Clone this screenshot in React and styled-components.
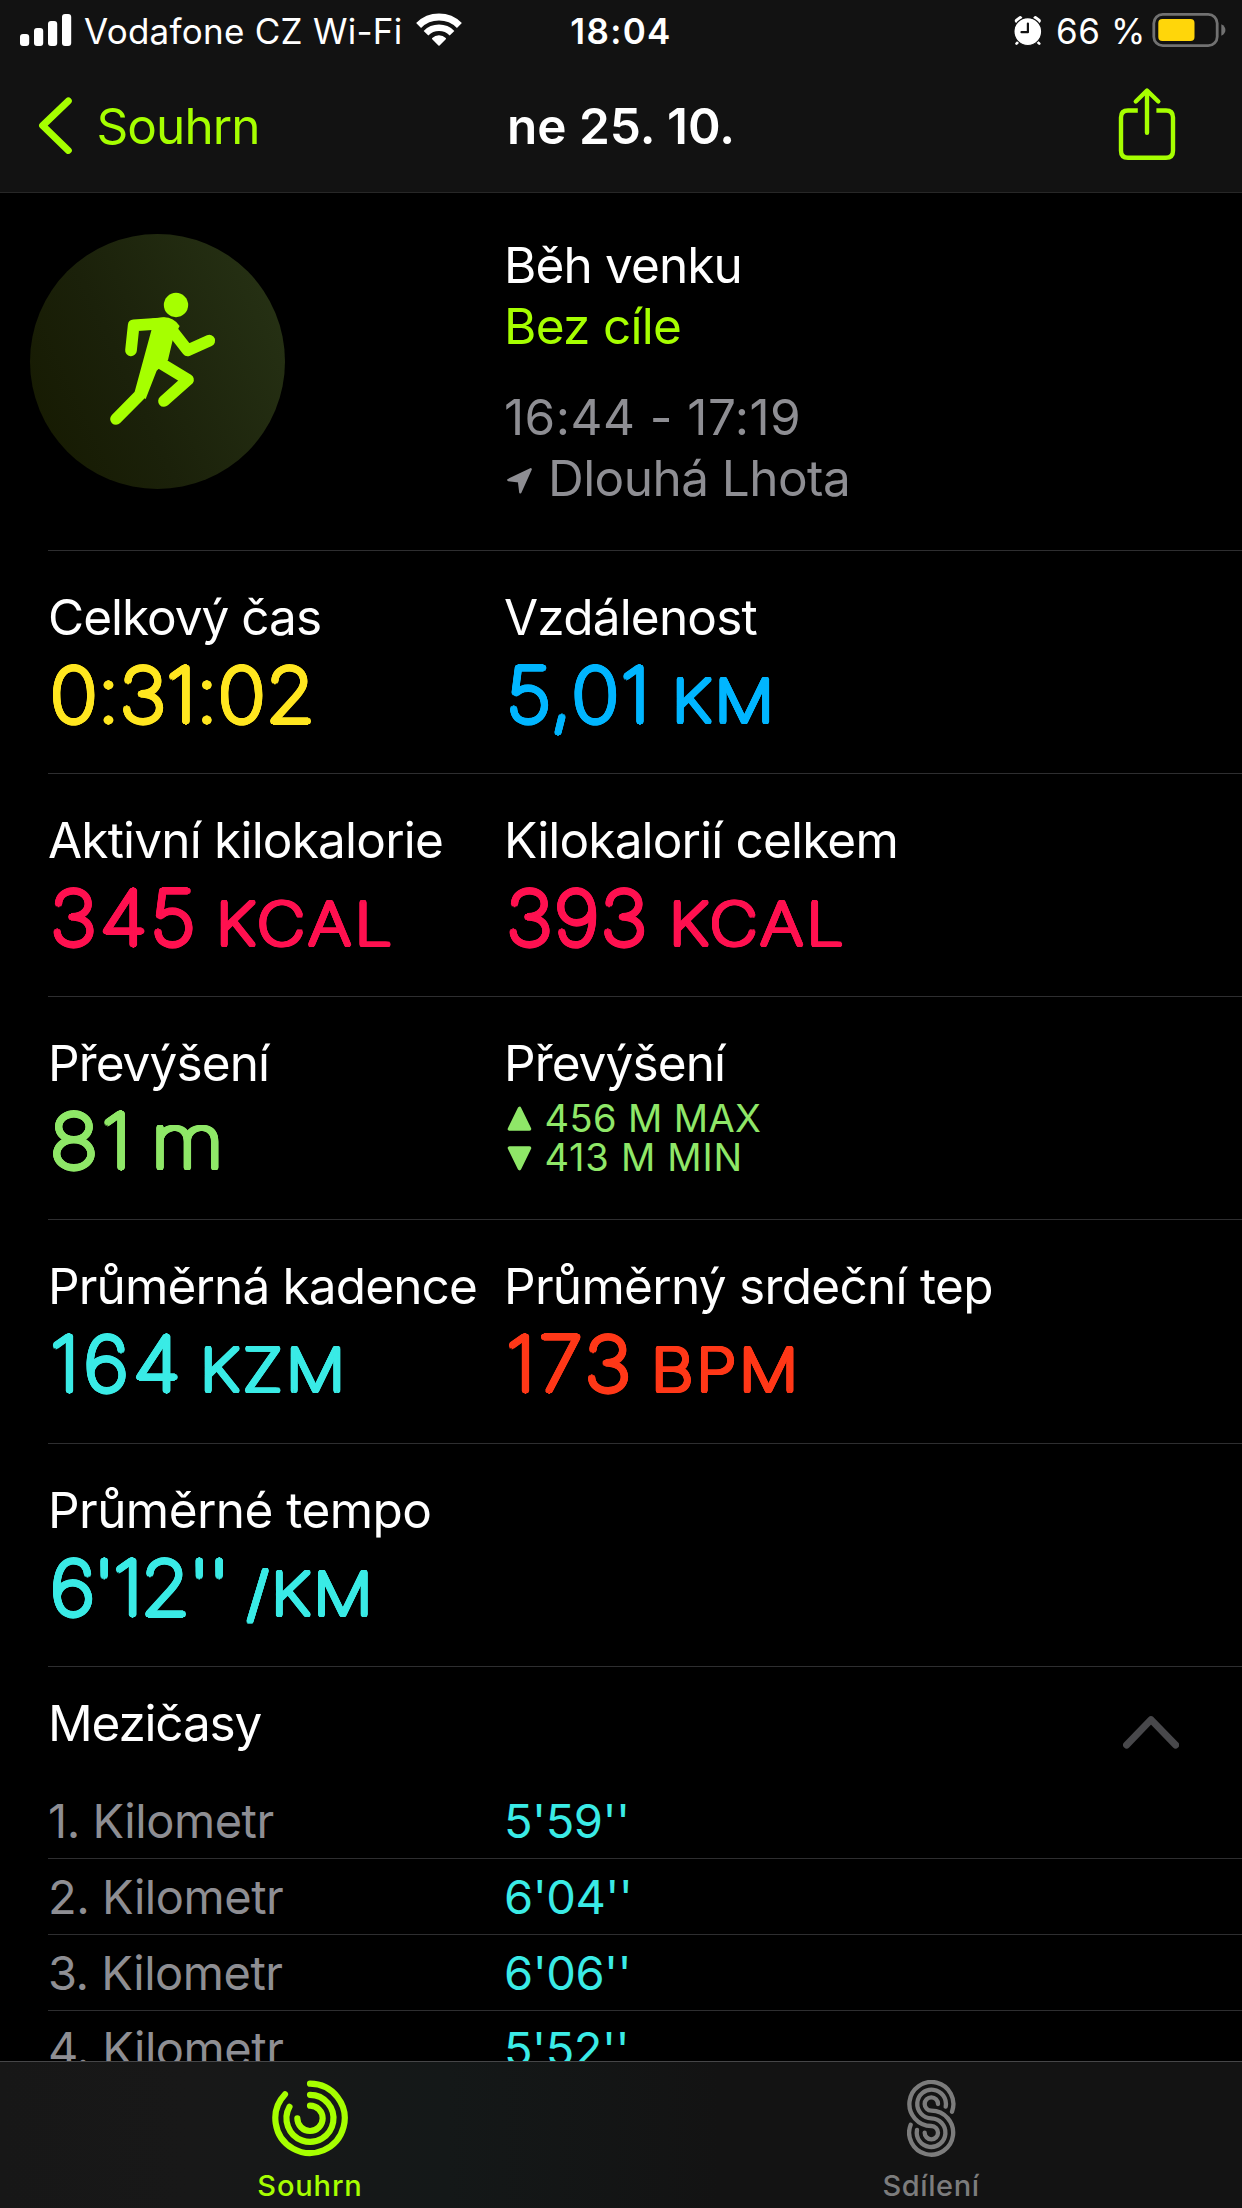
import React from "react";
import styled, { createGlobalStyle } from "styled-components";

const colors = {
  lime: "#a6ff00",
  gray: "#8e8e93",
  line: "#2e2e30",
  yellow: "#ffe620",
  blue: "#00b6ff",
  pink: "#ff1150",
  green: "#8fe768",
  cyan: "#3aebe6",
  red: "#ff3818",
};

// thin strokes thickened on every side, so the digits get round ends
const roundStroke = (r) =>
  Array.from({ length: 16 }, (_, i) => {
    const a = (i * Math.PI) / 8;
    return `${(Math.cos(a) * r).toFixed(2)}px ${(Math.sin(a) * r).toFixed(2)}px 0 currentColor`;
  }).join(", ");

const GlobalStyles = createGlobalStyle`
  * {
    box-sizing: border-box;
  }
  body {
    margin: 0;
    background: #000;
    color: #fff;
    font-family: Inter, "Liberation Sans", sans-serif;
  }
  svg {
    display: block;
    flex-shrink: 0;
  }
`;

const Screen = styled.div`
  display: flex;
  flex-direction: column;
  width: 1242px;
  height: 2208px;
  overflow: hidden;
  background: #000;
`;

const Header = styled.header`
  flex-shrink: 0;
  height: 193px;
  background: #121212;
  border-bottom: 1px solid #272727;
`;

const StatusBar = styled.div`
  display: grid;
  grid-template-columns: 1fr auto 1fr;
  align-items: center;
  height: 62px;
  padding: 0 16px;
  font-size: 35px;
  line-height: 62px;
  white-space: pre;
`;

const StatusLeft = styled.div`
  display: flex;
  align-items: center;
  padding-left: 4px;
`;

const StatusRight = styled.div`
  display: flex;
  align-items: center;
  justify-content: flex-end;
`;

const Carrier = styled.span`
  margin: 0 13px 0 12px;
  letter-spacing: 0.27px;
`;

const Charge = styled.span`
  margin: 0 6px 0 14px;
  letter-spacing: 0.58px;
`;

const Clock = styled.div`
  font-weight: 600;
  letter-spacing: 1.34px;
`;

const NavBar = styled.nav`
  display: grid;
  grid-template-columns: 1fr auto 1fr;
  align-items: center;
  height: 130px;
  padding: 0 37px;
  font-size: 49.5px;
`;

const NavTitle = styled.h1`
  margin: 0;
  padding-bottom: 2px;
  font-size: 49.5px;
  font-weight: 600;
  line-height: 60px;
`;

const BackButton = styled.a`
  display: flex;
  align-items: center;
  gap: 22.5px;
  color: ${colors.lime};
  letter-spacing: -0.92px;
  span {
    padding-bottom: 2px;
    line-height: 60px;
  }
`;

const ShareButton = styled.a`
  justify-self: end;
  margin-right: 28px;
`;

const Content = styled.main`
  flex: 1;
  min-height: 0;
  overflow: hidden;
`;

const Hero = styled.section`
  display: grid;
  grid-template-columns: 474px 1fr;
  height: 357px;
  padding: 41px 0 0 30px;
`;

const Badge = styled.div`
  width: 255px;
  height: 255px;
  border-radius: 50%;
  background: linear-gradient(65deg, #161a01 4%, #1b210a 40%, #263114 92%);
`;

const HeroText = styled.div`
  padding-top: 1px;
`;

const HeroLine = styled.div`
  display: flex;
  align-items: center;
  gap: 15px;
  height: 61px;
  margin-top: ${(p) => p.$top || 0}px;
  font-size: 49.5px;
  line-height: 61px;
  color: ${(p) => p.$color || "#fff"};
  letter-spacing: ${(p) => p.$ls || 0}px;
  svg {
    margin: 3px 0 0 2px;
  }
`;

const StatRow = styled.section`
  display: grid;
  grid-template-columns: 456px 1fr;
  height: ${(p) => p.$height || 223}px;
  margin-left: 48px;
  padding-top: 36px;
  border-bottom: 1px solid ${colors.line};
`;

const Divider = styled.div`
  height: 1px;
  margin-left: 48px;
  background: ${colors.line};
`;

const Label = styled.div`
  font-size: 49.5px;
  line-height: 60px;
  white-space: nowrap;
  letter-spacing: ${(p) => p.$ls || 0}px;
`;

const Value = styled.div`
  display: flex;
  align-items: baseline;
  margin: 8px 0 0 2px;
  font-weight: 100;
  line-height: 80px;
  white-space: nowrap;
  color: ${(p) => p.$color};
`;

const Digits = styled.span`
  font-size: 75px;
  letter-spacing: ${(p) => p.$ls}px;
  text-shadow: ${roundStroke(2.6)};
  transform: scaleX(1.07);
  transform-origin: left;
`;

const Unit = styled.span`
  margin-left: ${(p) => p.$left}px;
  font-size: ${(p) => p.$size || 59}px;
  letter-spacing: ${(p) => p.$ls || 0}px;
  text-shadow: ${roundStroke(2.4)};
  transform: scaleX(1.12);
  transform-origin: left;
`;

const Range = styled.div`
  margin-top: 6px;
  color: ${colors.green};
`;

const RangeLine = styled.div`
  display: flex;
  align-items: center;
  gap: 12.5px;
  height: 39px;
  padding-left: 3px;
  font-size: 38px;
  line-height: 39px;
  letter-spacing: ${(p) => p.$ls}px;
`;

const SplitsHeader = styled.div`
  display: flex;
  justify-content: space-between;
  height: 116px;
  padding: 26px 63px 0 48px;
`;

const Split = styled.div`
  display: grid;
  grid-template-columns: 456px 1fr;
  height: 76px;
  margin-left: 48px;
  border-bottom: 1px solid ${colors.line};
  font-size: 47px;
  line-height: 76px;
`;

const SplitName = styled.span`
  color: ${colors.gray};
  letter-spacing: -0.46px;
`;

const SplitTime = styled.span`
  color: ${colors.cyan};
  letter-spacing: -0.5px;
`;

const TabBar = styled.nav`
  display: grid;
  grid-template-columns: 1fr 1fr;
  flex-shrink: 0;
  height: 147px;
  border-top: 1px solid #464648;
  background: linear-gradient(90deg, #171717, #181818 15%, #141818 36%, #131313 58%, #131313);
`;

const Tab = styled.a`
  display: flex;
  flex-direction: column;
  align-items: center;
  gap: 11px;
  padding: 18px 1px 0 0;
  font-size: 29px;
  font-weight: 500;
  line-height: 36px;
  color: ${(p) => (p.$active ? colors.lime : "#7c7c7c")};
  letter-spacing: ${(p) => p.$ls}px;
`;

const SignalIcon = () => (
  <svg width="52" height="62" viewBox="20 0 52 62" fill="#fff">
    <rect x="20" y="34" width="9.2" height="12" rx="3" />
    <rect x="34" y="28" width="9.2" height="18" rx="3" />
    <rect x="48" y="21" width="9.2" height="25" rx="3" />
    <rect x="62" y="14" width="9.2" height="32" rx="3" />
  </svg>
);

const WifiIcon = () => (
  <svg width="46" height="62" viewBox="416 0 46 62" fill="none" stroke="#fff">
    <path d="M418.6 25.4A29 29 0 0 1 459.4 25.4" strokeWidth="7" />
    <path d="M426 33.2A18.3 18.3 0 0 1 452 33.2" strokeWidth="6.6" />
    <path d="M439 45 L432.8 38.6 A9 9 0 0 1 445.2 38.6Z" fill="#fff" strokeWidth="1.6" strokeLinejoin="round" />
  </svg>
);

const AlarmIcon = () => (
  <svg width="28" height="62" viewBox="1014.5 0 28 62" fill="none" strokeLinecap="round">
    <g stroke="#fff" strokeWidth="4.5">
      <path d="M1017.6 20.8L1020.6 18.4M1039 20.8L1036 18.4" />
      <path d="M1019.5 41L1017 43.6M1037 41L1039.8 43.6" strokeWidth="2.6" />
    </g>
    <circle cx="1028.3" cy="31.6" r="13.9" fill="#fff" stroke="#121212" strokeWidth="1.2" />
    <path d="M1028.4 23.5V32.2H1022" stroke="#121212" strokeWidth="2.2" strokeLinejoin="round" />
  </svg>
);

const BatteryIcon = () => (
  <svg width="74" height="62" viewBox="1152.5 0 74 62" fill="none">
    <rect x="1154.3" y="14.3" width="63.4" height="31.4" rx="9" stroke="#717171" strokeWidth="2.8" />
    <rect x="1158.8" y="19" width="36.2" height="22" rx="4" fill="#ffd60a" />
    <path d="M1221.8 24.2C1227.3 26.5 1227.3 33.5 1221.8 35.8Z" fill="#717171" />
  </svg>
);

const BackIcon = () => (
  <svg width="37" height="130" viewBox="37 62 37 130" fill="none">
    <path d="M68.3 101L42.6 125.6L68.3 150.4" stroke={colors.lime} strokeWidth="7" strokeLinecap="round" strokeLinejoin="round" />
  </svg>
);

const ShareIcon = () => (
  <svg width="60" height="130" viewBox="1117 62 60 130" fill="none" stroke={colors.lime} strokeWidth="4.4">
    <path d="M1137.8 110.5H1128Q1121 110.5 1121 117.5V150.8Q1121 157.8 1128 157.8H1166Q1173 157.8 1173 150.8V117.5Q1173 110.5 1166 110.5H1156.4" />
    <path d="M1147 91V132.8M1135.8 101.5L1147 90.5L1158.3 101.5" strokeLinecap="round" strokeLinejoin="round" />
  </svg>
);

const RunnerIcon = () => (
  <svg width="255" height="255" viewBox="30 42 765 765" fill="none">
    <g stroke={colors.lime} strokeWidth="35" strokeLinecap="round" strokeLinejoin="round">
      <path d="M333 391L341 316L430 310" />
      <path d="M446 318L503 391L568 362" />
      <path d="M361 523L288 597" />
      <path d="M426 432L504 479L432 543" />
    </g>
    <g fill={colors.lime}>
      <circle cx="468" cy="255" r="36.5" />
      <path d="M395 328L344 515L377 537L410 452L444 420L459 356L479 318Q461 292 432 292L395 296Z" />
    </g>
  </svg>
);

const LocationIcon = () => (
  <svg width="27" height="27" viewBox="0 0 81 81">
    <path d="M7 39L74 7L43 76L39 43Z" fill={colors.gray} stroke={colors.gray} strokeWidth="7" strokeLinejoin="round" />
  </svg>
);

const Triangle = ({ down }) => (
  <svg width="25" height="26" viewBox="0 0 25 26">
    <path
      d={down ? "M2.5 3H22.5L12.5 23.5Z" : "M2.5 23H22.5L12.5 2.5Z"}
      fill={colors.green}
      stroke={colors.green}
      strokeWidth="3.6"
      strokeLinejoin="round"
    />
  </svg>
);

const CollapseIcon = () => (
  <svg width="56" height="60" viewBox="1123 1693 56 60" fill="none">
    <path d="M1126.6 1745L1151 1719.6L1175.6 1745" stroke="#48484b" strokeWidth="7" strokeLinecap="round" strokeLinejoin="round" />
  </svg>
);

const RingsIcon = () => (
  <svg width="76" height="77" viewBox="126 89 228 231" fill="none" stroke="currentColor" strokeWidth="18.5" strokeLinecap="round">
    <path d="M240 100A104 104 0 1 1 165 132" />
    <path d="M240 133.5A70.5 70.5 0 1 1 178.5 169.5" />
    <path d="M240 166A38 38 0 1 1 202 204" />
  </svg>
);

const SharingIcon = () => (
  <svg width="49" height="77" viewBox="170 89 147 231" fill="none" stroke="currentColor" strokeWidth="13" strokeLinecap="round">
    <path d="M305 184A66 66 0 1 0 243 227A20 20 0 1 1 223 247" />
    <path d="M286 169A43 43 0 1 0 243 204A43 43 0 1 1 200 239" />
    <path d="M263 161A20 20 0 1 0 243 181A66 66 0 1 1 181 223" />
  </svg>
);

const splits = ["5'59''", "6'04''", "6'06''", "5'52''"];

const App = () => {
  return (
    <>
      <GlobalStyles />
      <Screen>
        <Header>
          <StatusBar>
            <StatusLeft>
              <SignalIcon />
              <Carrier>Vodafone CZ Wi-Fi</Carrier>
              <WifiIcon />
            </StatusLeft>
            <Clock>18:04</Clock>
            <StatusRight>
              <AlarmIcon />
              <Charge>66 %</Charge>
              <BatteryIcon />
            </StatusRight>
          </StatusBar>
          <NavBar>
            <BackButton>
              <BackIcon />
              <span>Souhrn</span>
            </BackButton>
            <NavTitle>ne 25. 10.</NavTitle>
            <ShareButton>
              <ShareIcon />
            </ShareButton>
          </NavBar>
        </Header>
        <Content>
          <Hero>
            <Badge>
              <RunnerIcon />
            </Badge>
            <HeroText>
              <HeroLine $ls={-0.87}>Běh venku</HeroLine>
              <HeroLine $ls={-0.72} $color={colors.lime}>
                Bez cíle
              </HeroLine>
              <HeroLine $ls={0.46} $color={colors.gray} $top={30}>
                16:44 - 17:19
              </HeroLine>
              <HeroLine $ls={-0.55} $color={colors.gray}>
                <LocationIcon />
                Dlouhá Lhota
              </HeroLine>
            </HeroText>
          </Hero>
          <Divider />
          <StatRow>
            <div>
              <Label $ls={-1}>Celkový čas</Label>
              <Value $color={colors.yellow}>
                <Digits $ls={0.17}>0:31:02</Digits>
              </Value>
            </div>
            <div>
              <Label $ls={-0.8}>Vzdálenost</Label>
              <Value $color={colors.blue}>
                <Digits $ls={1.35}>5,01</Digits>
                <Unit $left={30} $ls={2.9}>KM</Unit>
              </Value>
            </div>
          </StatRow>
          <StatRow>
            <div>
              <Label $ls={-0.8}>Aktivní kilokalorie</Label>
              <Value $color={colors.pink}>
                <Digits $ls={2.75}>345</Digits>
                <Unit $left={27} $ls={3.6}>KCAL</Unit>
              </Value>
            </div>
            <div>
              <Label $ls={-0.84}>Kilokalorií celkem</Label>
              <Value $color={colors.pink}>
                <Digits $ls={1.2}>393</Digits>
                <Unit $left={29.5} $ls={3.2}>KCAL</Unit>
              </Value>
            </div>
          </StatRow>
          <StatRow>
            <div>
              <Label $ls={-0.9}>Převýšení</Label>
              <Value $color={colors.green}>
                <Digits $ls={3.5}>81</Digits>
                <Unit $left={21.5} $size={75}>m</Unit>
              </Value>
            </div>
            <div>
              <Label $ls={-0.9}>Převýšení</Label>
              <Range>
                <RangeLine $ls={0.38}>
                  <Triangle />
                  456 M MAX
                </RangeLine>
                <RangeLine $ls={0.74}>
                  <Triangle down />
                  413 M MIN
                </RangeLine>
              </Range>
            </div>
          </StatRow>
          <StatRow $height={224}>
            <div>
              <Label $ls={-0.85}>Průměrná kadence</Label>
              <Value $color={colors.cyan}>
                <Digits $ls={3.8}>164</Digits>
                <Unit $left={24} $ls={2.8}>KZM</Unit>
              </Value>
            </div>
            <div>
              <Label $ls={-0.7}>Průměrný srdeční tep</Label>
              <Value $color={colors.red}>
                <Digits $ls={3}>173</Digits>
                <Unit $left={25.5} $ls={2.5}>BPM</Unit>
              </Value>
            </div>
          </StatRow>
          <StatRow>
            <div>
              <Label $ls={-0.55}>Průměrné tempo</Label>
              <Value $color={colors.cyan}>
                <Digits $ls={-1.98}>6'12''</Digits>
                <Unit $left={30.5} $ls={2.45}>/KM</Unit>
              </Value>
            </div>
          </StatRow>
          <SplitsHeader>
            <Label $ls={-1.2}>Mezičasy</Label>
            <CollapseIcon />
          </SplitsHeader>
          {splits.map((time, i) => (
            <Split key={time}>
              <SplitName>{i + 1}. Kilometr</SplitName>
              <SplitTime>{time}</SplitTime>
            </Split>
          ))}
        </Content>
        <TabBar>
          <Tab $active $ls={0.86}>
            <RingsIcon />
            Souhrn
          </Tab>
          <Tab $ls={0.59}>
            <SharingIcon />
            Sdílení
          </Tab>
        </TabBar>
      </Screen>
    </>
  );
};

export default App;
